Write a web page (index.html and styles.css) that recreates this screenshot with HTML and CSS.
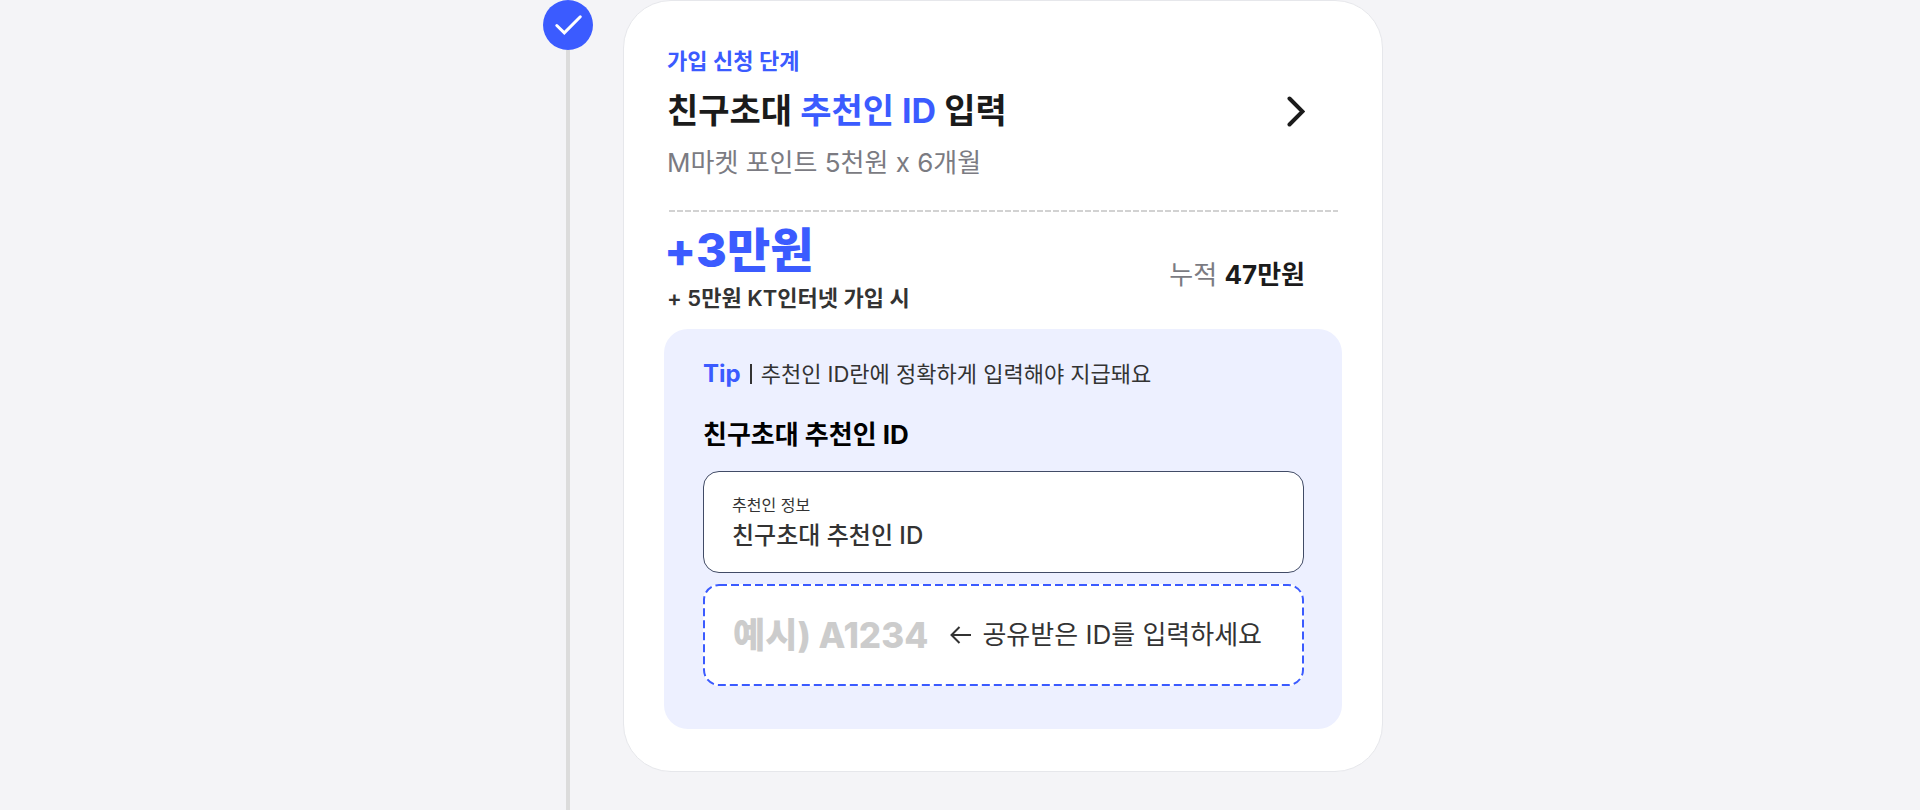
FILE: index.html
```html
<!DOCTYPE html>
<html lang="ko">
<head>
<meta charset="utf-8">
<meta name="viewport" content="width=device-width, initial-scale=1">
<title>친구초대 추천인 ID 입력</title>
<link rel="stylesheet" href="styles.css">
</head>
<body>
<main class="steps">
  <div class="rail">
    <svg class="rail-check" viewBox="0 0 50 50" aria-hidden="true">
      <circle cx="25" cy="25" r="25" fill="#3b5bff"/>
      <path d="M13.800 25.500 21.300 32.800 37.300 16.800" fill="none" stroke="#fff" stroke-width="3" stroke-linecap="round" stroke-linejoin="miter"/>
    </svg>
    <div class="rail-line"></div>
  </div>
  <article class="card">
    <header class="head">
      <div class="head-text">
        <p class="step">가입 신청 단계</p>
        <h2 class="title">친구초대 <em class="accent">추천인 ID</em> 입력</h2>
        <p class="sub">M마켓 포인트 5천원 x 6개월</p>
      </div>
      <button class="more" type="button" aria-label="자세히 보기">
        <svg viewBox="0 0 18 36" width="18" height="36" aria-hidden="true"><path d="M2.500 2.500 15.500 15.500 2.500 28.500" fill="none" stroke="#1b1b1b" stroke-width="4" stroke-linecap="round" stroke-linejoin="miter"/></svg>
      </button>
    </header>
    <div class="divider"></div>
    <section class="reward">
      <div>
        <p class="amount">+3만원</p>
        <p class="bonus">+ 5만원 KT인터넷 가입 시</p>
      </div>
      <p class="total">누적 <strong>47만원</strong></p>
    </section>
    <section class="tip">
      <p class="tip-line"><strong class="tip-mark">Tip</strong><span class="tip-bar"></span><span>추천인 ID란에 정확하게 입력해야 지급돼요</span></p>
      <h3 class="tip-title">친구초대 추천인 ID</h3>
      <div class="field field-solid">
        <label class="field-label" for="kind">추천인 정보</label>
        <input class="field-value" id="kind" type="text" value="친구초대 추천인 ID" readonly>
      </div>
      <div class="field field-dashed">
        <svg class="dashes" aria-hidden="true"><rect class="dashes-rect" x="1" y="1" rx="15"/></svg>
        <input class="code" id="code" type="text" placeholder="예시) A1234">
        <label class="hint" for="code"><svg viewBox="0 0 22 18" width="22" height="18" aria-hidden="true"><path d="M21 9H2M9.500 1 1.500 9l8 8" fill="none" stroke="#333" stroke-width="2"/></svg>공유받은 ID를 입력하세요</label>
      </div>
    </section>
  </article>
</main>
</body>
</html>
```
FILE: styles.css
```css
* {
  box-sizing: border-box;
}

body {
  margin: 0;
  background: #f4f4f7;
  color: #1b1b1b;
  font-family: Inter, "Noto Sans CJK KR", sans-serif;
}

p, h2, h3 {
  margin: 0;
}

input, button {
  font-family: inherit;
  border: 0;
  padding: 0;
  background: none;
}

.steps {
  display: flex;
  justify-content: center;
  gap: 30px;
  min-height: 100vh;
  padding-left: 6px;
}

.rail {
  display: flex;
  flex-direction: column;
  align-items: center;
  width: 50px;
}

.rail-check {
  width: 50px;
  height: 50px;
}

.rail-line {
  flex: 1;
  width: 4px;
  background: #dcdcdc;
}

.card {
  flex: 0 1 760px;
  align-self: flex-start;
  min-width: 0;
  padding: 44px 40px 42px;
  border: 1px solid #e6e7eb;
  border-radius: 48px;
  background: #fff;
}

.head {
  display: flex;
  justify-content: space-between;
  align-items: center;
  padding: 0 37px 0 3px;
}

.step {
  font-size: 22px;
  line-height: 32px;
  font-weight: 600;
  color: #3b5bff;
}

.title {
  margin-top: 9px;
  font-size: 34px;
  line-height: 50px;
  font-weight: 700;
}

.accent {
  font-style: normal;
  color: #3b5bff;
}

.sub {
  margin-top: 8px;
  font-size: 26px;
  line-height: 38px;
  color: #7b7b82;
}

.more {
  display: flex;
  cursor: pointer;
}

.divider {
  height: 2px;
  margin: 28px 4px 0 5px;
  background: repeating-linear-gradient(90deg, #d2d2d2 0 6px, transparent 6px 8px);
}

.reward {
  display: flex;
  justify-content: space-between;
  align-items: flex-end;
  padding: 9px 37px 12px 0;
}

.amount {
  font-size: 47px;
  line-height: 58px;
  font-weight: 800;
  color: #3b5bff;
}

.bonus {
  padding-left: 3px;
  font-size: 22px;
  line-height: 38px;
  font-weight: 600;
  color: #333;
}

.total {
  padding-bottom: 23px;
  font-size: 26px;
  line-height: 38px;
  color: #7b7b82;
}

.total strong {
  color: #1b1b1b;
}

.tip {
  padding: 28px 38px 43px 39px;
  border-radius: 24px;
  background: #edf0ff;
}

.tip-line {
  display: flex;
  align-items: center;
  font-size: 22px;
  line-height: 34px;
  font-weight: 400;
  color: #333;
}

.tip-mark {
  font-size: 24px;
  font-weight: 700;
  color: #3b5bff;
}

.tip-bar {
  width: 2px;
  height: 20px;
  margin: 0 9px;
  background: #333;
}

.tip-title {
  margin: 25px 0 17px;
  font-size: 26px;
  line-height: 38px;
  font-weight: 700;
  color: #000;
}

.field {
  display: flex;
  height: 102px;
  border-radius: 16px;
  background: #fff;
}

.field-solid {
  flex-direction: column;
  justify-content: center;
  padding: 0 28px 2px;
  border: 1px solid #414b66;
}

.field-label {
  font-size: 16px;
  line-height: 24px;
  color: #333;
}

.field-value {
  width: 100%;
  height: 32px;
  font-size: 24px;
  font-weight: 500;
  color: #333;
}

.field-dashed {
  position: relative;
  align-items: center;
  gap: 8px;
  margin-top: 11px;
  padding: 0 30px;
}

.dashes {
  position: absolute;
  inset: 0;
  width: 100%;
  height: 100%;
  pointer-events: none;
}

.dashes-rect {
  width: calc(100% - 2px);
  height: calc(100% - 2px);
  fill: none;
  stroke: #3b5bff;
  stroke-width: 2px;
  stroke-dasharray: 8px 4px;
}

.code {
  flex: 1;
  width: 0;
  min-width: 0;
  height: 50px;
  font-size: 35px;
  font-weight: 800;
  color: #1b1b1b;
}

.code::placeholder {
  color: #ccc;
  opacity: 1;
}

.hint {
  display: flex;
  align-items: center;
  gap: 10px;
  padding-right: 12px;
  font-size: 26px;
  line-height: 38px;
  font-weight: 400;
  color: #333;
  white-space: nowrap;
}
```
